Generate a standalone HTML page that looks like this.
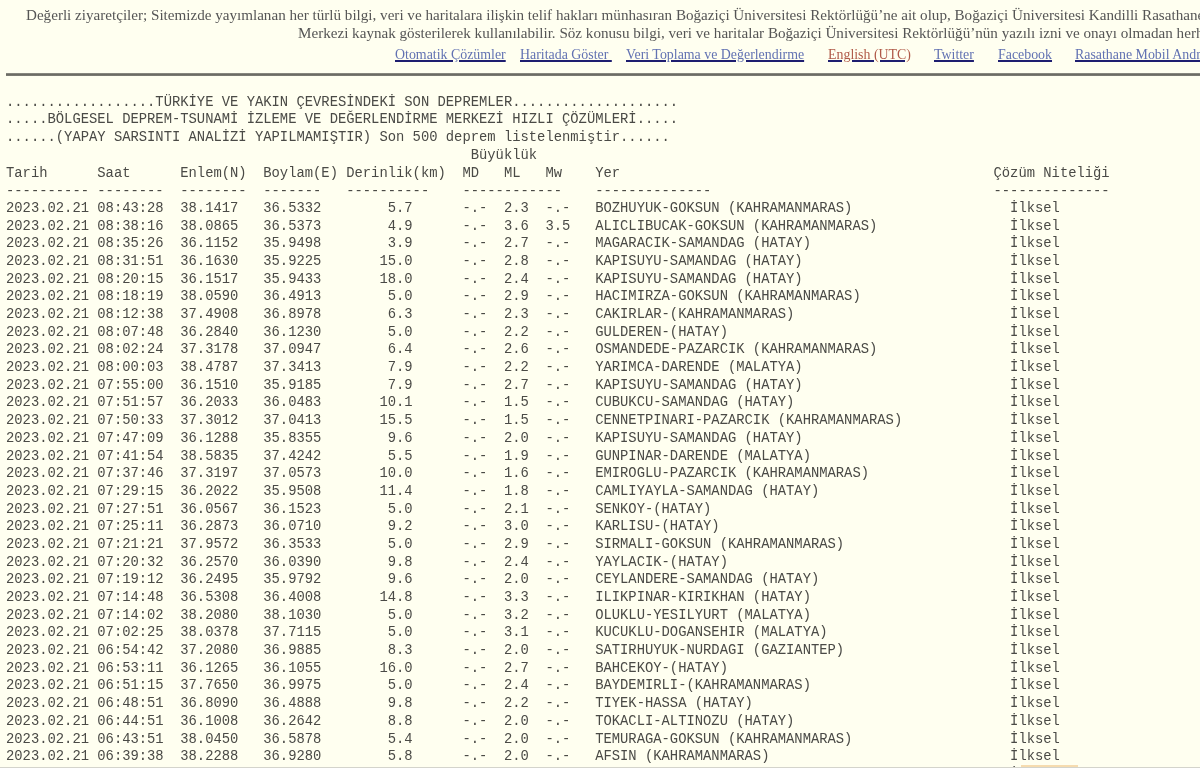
<!DOCTYPE html>
<html><head><meta charset="utf-8">
<style>
html,body{margin:0;padding:0;}
body{width:1200px;height:768px;overflow:hidden;background:#FFFFF0;position:relative;}
.wrap{position:absolute;left:0;top:0;width:1200px;height:768px;filter:blur(0.3px);}
.p{position:absolute;white-space:nowrap;font-family:"Liberation Serif",serif;font-size:15.12px;color:#555;line-height:17px;}
.lk{position:absolute;white-space:nowrap;font-family:"Liberation Serif",serif;font-size:13.9px;line-height:17px;}
.lk a{color:#6272b2;text-decoration:underline;text-decoration-color:#1e1e70;text-decoration-thickness:2px;}
.hr{position:absolute;left:6px;top:73px;width:1300px;height:3px;background:linear-gradient(#94948c,#6c6c64 50%,#80807a);}
pre{position:absolute;left:6px;top:93.8px;margin:0;font-family:"Liberation Mono",monospace;font-size:13.83px;line-height:17.68px;color:#4a4a46;}
.dl{position:relative;top:1px;}
</style></head><body><div class="wrap">
<div class="p" style="left:26px;top:7.4px">Değerli ziyaretçiler; Sitemizde yayımlanan her türlü bilgi, veri ve haritalara ilişkin telif hakları münhasıran Boğaziçi Üniversitesi Rektörlüğü’ne ait olup, Boğaziçi Üniversitesi Kandilli Rasathanesi ve Deprem Araştırma Enstitüsü</div>
<div class="p" style="left:298px;top:25px">Merkezi kaynak gösterilerek kullanılabilir. Söz konusu bilgi, veri ve haritalar Boğaziçi Üniversitesi Rektörlüğü’nün yazılı izni ve onayı olmadan herhangi bir şekilde</div>
<div class="lk" style="left:395px;top:46px"><a>Otomatik Çözümler</a></div>
<div class="lk" style="left:520px;top:46px"><a>Haritada Göster&nbsp;</a></div>
<div class="lk" style="left:626px;top:46px"><a>Veri Toplama ve Değerlendirme</a></div>
<div class="lk" style="left:828px;top:46px"><a><span style="color:#b05a48">English (UTC)</span></a></div>
<div class="lk" style="left:934px;top:46px"><a>Twitter</a></div>
<div class="lk" style="left:998px;top:46px"><a>Facebook</a></div>
<div class="lk" style="left:1075px;top:46px"><a>Rasathane Mobil Android</a></div>
<div class="hr"></div>
<pre>..................TÜRKİYE VE YAKIN ÇEVRESİNDEKİ SON DEPREMLER....................
.....BÖLGESEL DEPREM-TSUNAMİ İZLEME VE DEĞERLENDİRME MERKEZİ HIZLI ÇÖZÜMLERİ.....
......(YAPAY SARSINTI ANALİZİ YAPILMAMIŞTIR) Son 500 deprem listelenmiştir......
                                                        Büyüklük
Tarih      Saat      Enlem(N)  Boylam(E) Derinlik(km)  MD   ML   Mw    Yer                                             Çözüm Niteliği
<span class="dl">---------- --------  --------  -------   ----------    ------------    --------------                                  --------------</span>
2023.02.21 08:43:28  38.1417   36.5332        5.7      -.-  2.3  -.-   BOZHUYUK-GOKSUN (KAHRAMANMARAS)                   İlksel
2023.02.21 08:38:16  38.0865   36.5373        4.9      -.-  3.6  3.5   ALICLIBUCAK-GOKSUN (KAHRAMANMARAS)                İlksel
2023.02.21 08:35:26  36.1152   35.9498        3.9      -.-  2.7  -.-   MAGARACIK-SAMANDAG (HATAY)                        İlksel
2023.02.21 08:31:51  36.1630   35.9225       15.0      -.-  2.8  -.-   KAPISUYU-SAMANDAG (HATAY)                         İlksel
2023.02.21 08:20:15  36.1517   35.9433       18.0      -.-  2.4  -.-   KAPISUYU-SAMANDAG (HATAY)                         İlksel
2023.02.21 08:18:19  38.0590   36.4913        5.0      -.-  2.9  -.-   HACIMIRZA-GOKSUN (KAHRAMANMARAS)                  İlksel
2023.02.21 08:12:38  37.4908   36.8978        6.3      -.-  2.3  -.-   CAKIRLAR-(KAHRAMANMARAS)                          İlksel
2023.02.21 08:07:48  36.2840   36.1230        5.0      -.-  2.2  -.-   GULDEREN-(HATAY)                                  İlksel
2023.02.21 08:02:24  37.3178   37.0947        6.4      -.-  2.6  -.-   OSMANDEDE-PAZARCIK (KAHRAMANMARAS)                İlksel
2023.02.21 08:00:03  38.4787   37.3413        7.9      -.-  2.2  -.-   YARIMCA-DARENDE (MALATYA)                         İlksel
2023.02.21 07:55:00  36.1510   35.9185        7.9      -.-  2.7  -.-   KAPISUYU-SAMANDAG (HATAY)                         İlksel
2023.02.21 07:51:57  36.2033   36.0483       10.1      -.-  1.5  -.-   CUBUKCU-SAMANDAG (HATAY)                          İlksel
2023.02.21 07:50:33  37.3012   37.0413       15.5      -.-  1.5  -.-   CENNETPINARI-PAZARCIK (KAHRAMANMARAS)             İlksel
2023.02.21 07:47:09  36.1288   35.8355        9.6      -.-  2.0  -.-   KAPISUYU-SAMANDAG (HATAY)                         İlksel
2023.02.21 07:41:54  38.5835   37.4242        5.5      -.-  1.9  -.-   GUNPINAR-DARENDE (MALATYA)                        İlksel
2023.02.21 07:37:46  37.3197   37.0573       10.0      -.-  1.6  -.-   EMIROGLU-PAZARCIK (KAHRAMANMARAS)                 İlksel
2023.02.21 07:29:15  36.2022   35.9508       11.4      -.-  1.8  -.-   CAMLIYAYLA-SAMANDAG (HATAY)                       İlksel
2023.02.21 07:27:51  36.0567   36.1523        5.0      -.-  2.1  -.-   SENKOY-(HATAY)                                    İlksel
2023.02.21 07:25:11  36.2873   36.0710        9.2      -.-  3.0  -.-   KARLISU-(HATAY)                                   İlksel
2023.02.21 07:21:21  37.9572   36.3533        5.0      -.-  2.9  -.-   SIRMALI-GOKSUN (KAHRAMANMARAS)                    İlksel
2023.02.21 07:20:32  36.2570   36.0390        9.8      -.-  2.4  -.-   YAYLACIK-(HATAY)                                  İlksel
2023.02.21 07:19:12  36.2495   35.9792        9.6      -.-  2.0  -.-   CEYLANDERE-SAMANDAG (HATAY)                       İlksel
2023.02.21 07:14:48  36.5308   36.4008       14.8      -.-  3.3  -.-   ILIKPINAR-KIRIKHAN (HATAY)                        İlksel
2023.02.21 07:14:02  38.2080   38.1030        5.0      -.-  3.2  -.-   OLUKLU-YESILYURT (MALATYA)                        İlksel
2023.02.21 07:02:25  38.0378   37.7115        5.0      -.-  3.1  -.-   KUCUKLU-DOGANSEHIR (MALATYA)                      İlksel
2023.02.21 06:54:42  37.2080   36.9885        8.3      -.-  2.0  -.-   SATIRHUYUK-NURDAGI (GAZIANTEP)                    İlksel
2023.02.21 06:53:11  36.1265   36.1055       16.0      -.-  2.7  -.-   BAHCEKOY-(HATAY)                                  İlksel
2023.02.21 06:51:15  37.7650   36.9975        5.0      -.-  2.4  -.-   BAYDEMIRLI-(KAHRAMANMARAS)                        İlksel
2023.02.21 06:48:51  36.8090   36.4888        9.8      -.-  2.2  -.-   TIYEK-HASSA (HATAY)                               İlksel
2023.02.21 06:44:51  36.1008   36.2642        8.8      -.-  2.0  -.-   TOKACLI-ALTINOZU (HATAY)                          İlksel
2023.02.21 06:43:51  38.0450   36.5878        5.4      -.-  2.0  -.-   TEMURAGA-GOKSUN (KAHRAMANMARAS)                   İlksel
2023.02.21 06:39:38  38.2288   36.9280        5.8      -.-  2.0  -.-   AFSIN (KAHRAMANMARAS)                             İlksel
2023.02.21 06:37:12  37.5512   36.8120        7.2      -.-  2.1  -.-   PAZARCIK (KAHRAMANMARAS)                          İlksel</pre>
<div style="position:absolute;left:1021px;top:765px;width:57px;height:2px;background:#f6dcb0"></div>
<div style="position:absolute;left:0;top:767px;width:1200px;height:1px;background:#d4d4cc"></div>
</div></body></html>
